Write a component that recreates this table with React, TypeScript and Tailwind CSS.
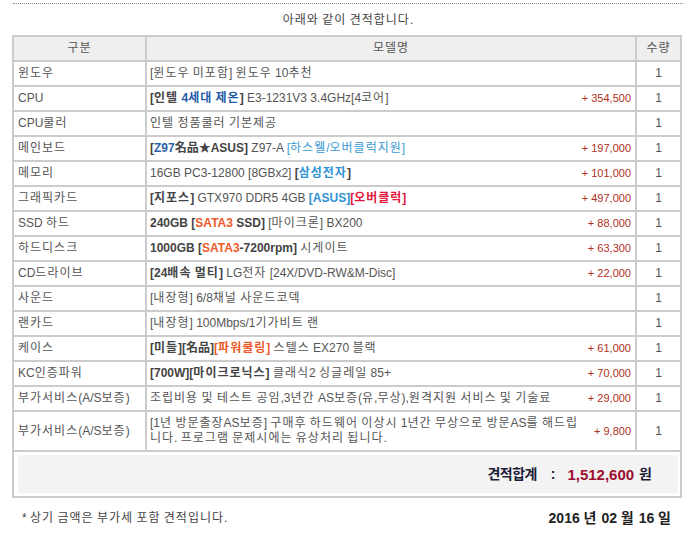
import React from "react";

const HANGUL = /([\u1100-\u11FF\u3130-\u318F\uAC00-\uD7AF]+)/;

function kr(node: React.ReactNode): React.ReactNode {
  if (typeof node === "string") {
    const parts = node.split(HANGUL);
    return parts.map((p, i) =>
      i % 2 === 1 ? (
        <span key={i} className="tracking-[1px]">
          {p}
        </span>
      ) : (
        <React.Fragment key={i}>{p}</React.Fragment>
      )
    );
  }
  if (Array.isArray(node)) return node.map((n, i) => <React.Fragment key={i}>{kr(n)}</React.Fragment>);
  if (React.isValidElement(node)) {
    const el = node as React.ReactElement<{ children?: React.ReactNode }>;
    if (el.props.children === undefined) return el;
    return React.cloneElement(el, undefined, kr(el.props.children));
  }
  return node;
}

const K = ({ children }: { children: React.ReactNode }) => <span>{kr(children)}</span>;

const B = ({ children, c = "text-[#444]" }: { children?: React.ReactNode; c?: string }) => (
  <span className={`font-bold ${c}`}>{children}</span>
);

type Row = { label: string; content: React.ReactNode; price?: string; tall?: boolean };

const rows: Row[] = [
  { label: "윈도우", content: "[윈도우 미포함] 윈도우 10추천" },
  {
    label: "CPU",
    content: (
      <>
        <B>[인텔 </B>
        <B c="text-[#1f5aa6]">4세대 제온</B>
        <B>]</B> E3-1231V3 3.4GHz[4코어]
      </>
    ),
    price: "354,500",
  },
  { label: "CPU쿨러", content: "인텔 정품쿨러 기본제공" },
  {
    label: "메인보드",
    content: (
      <>
        <B>[</B>
        <B c="text-[#2a62a8]">Z97</B>
        <B>名品★ASUS]</B> Z97-A <span className="text-[#3a9ad2]">[하스웰/오버클럭지원]</span>
      </>
    ),
    price: "197,000",
  },
  {
    label: "메모리",
    content: (
      <>
        16GB PC3-12800 [8GBx2] <B>[</B>
        <B c="text-[#2e92d4]">삼성전자</B>
        <B>]</B>
      </>
    ),
    price: "101,000",
  },
  {
    label: "그래픽카드",
    content: (
      <>
        <B>[지포스]</B> GTX970 DDR5 4GB <B c="text-[#2e92d4]">[ASUS]</B>
        <B c="text-[#e3163c]">[오버클럭]</B>
      </>
    ),
    price: "497,000",
  },
  {
    label: "SSD 하드",
    content: (
      <>
        <B>240GB [</B>
        <B c="text-[#ef5a2a]">SATA3</B>
        <B> SSD]</B> [마이크론] BX200
      </>
    ),
    price: "88,000",
  },
  {
    label: "하드디스크",
    content: (
      <>
        <B>1000GB [</B>
        <B c="text-[#ef5a2a]">SATA3</B>
        <B>-7200rpm]</B> 시게이트
      </>
    ),
    price: "63,300",
  },
  {
    label: "CD드라이브",
    content: (
      <>
        <B>[24배속 멀티]</B> LG전자 [24X/DVD-RW&amp;M-Disc]
      </>
    ),
    price: "22,000",
  },
  { label: "사운드", content: "[내장형] 6/8채널 사운드코덱" },
  { label: "랜카드", content: "[내장형] 100Mbps/1기가비트 랜" },
  {
    label: "케이스",
    content: (
      <>
        <B>[미들][名品]</B>
        <B c="text-[#ef5a2a]">[파워쿨링]</B> 스텔스 EX270 블랙
      </>
    ),
    price: "61,000",
  },
  {
    label: "KC인증파워",
    content: (
      <>
        <B>[700W][마이크로닉스]</B> 클래식2 싱글레일 85+
      </>
    ),
    price: "70,000",
  },
  {
    label: "부가서비스(A/S보증)",
    content: "조립비용 및 테스트 공임,3년간 AS보증(유,무상),원격지원 서비스 및 기술료",
    price: "29,000",
  },
  {
    label: "부가서비스(A/S보증)",
    content: (
      <>
        [1년 방문출장AS보증] 구매후 하드웨어 이상시 1년간 무상으로 방문AS를 해드립
        <br />
        니다. 프로그램 문제시에는 유상처리 됩니다.
      </>
    ),
    price: "9,800",
    tall: true,
  },
];

export default function App() {
  return (
    <div className="w-[696px] h-[533px] bg-white pt-[3px] text-[12px] text-[#555] font-['Liberation_Sans','Noto_Sans_CJK_KR',sans-serif] leading-[15px]">
      <div className="mx-[13px] w-[670px] border-t border-dotted border-[#888]" />
      <div className="h-[31px] flex items-center justify-center text-[#444] pt-[2px]">
        <K>아래와 같이 견적합니다.</K>
      </div>
      <div className="mx-[12px] w-[670px] bg-[#cccccc] p-[2px] flex flex-col gap-[2px]">
        <div className="grid grid-cols-[131px_488px_43px] gap-x-[2px] h-[23px]">
          <div className="bg-[#efefef] flex items-center justify-center">
            <K>구분</K>
          </div>
          <div className="bg-[#efefef] flex items-center justify-center">
            <K>모델명</K>
          </div>
          <div className="bg-[#efefef] flex items-center justify-center">
            <K>수량</K>
          </div>
        </div>
        {rows.map((r, i) => (
          <div
            key={i}
            className={`grid grid-cols-[131px_488px_43px] gap-x-[2px] ${r.tall ? "h-[38px]" : "h-[23px]"}`}
          >
            <div className="bg-white flex items-center pl-[4px] whitespace-nowrap">
              <K>{r.label}</K>
            </div>
            <div className="bg-white flex items-center pl-[3px] pr-[4px]">
              <div className="flex-1 whitespace-nowrap">{kr(r.content)}</div>
              {r.price && (
                <div className="text-[11px] text-[#b0301e] whitespace-nowrap text-right">+ {r.price}</div>
              )}
            </div>
            <div className="bg-white flex items-center justify-center">1</div>
          </div>
        ))}
        <div className="bg-white h-[44px] p-[3px] pl-[4px] pr-[2px]">
          <div className="bg-[#f3f3f3] h-full flex items-center justify-end pr-[26px] font-bold">
            <span className="text-[#1c1c38] text-[14px] tracking-[-0.6px]">견적합계</span>
            <span className="text-[#1c1c38] text-[14px] ml-[14px] mr-[12px]">:</span>
            <span className="text-[#9a0f30] text-[15px]">1,512,600</span>
            <span className="text-[#1c1c38] text-[14px] ml-[5px]">원</span>
          </div>
        </div>
      </div>
      <div className="mt-[10px] h-[20px] flex items-center justify-between pl-[22px] pr-[24px]">
        <span className="text-[#444]">{kr("* 상기 금액은 부가세 포함 견적입니다.")}</span>
        <span className="text-[14px] font-bold text-[#222]">{kr("2016 년 02 월 16 일")}</span>
      </div>
    </div>
  );
}
